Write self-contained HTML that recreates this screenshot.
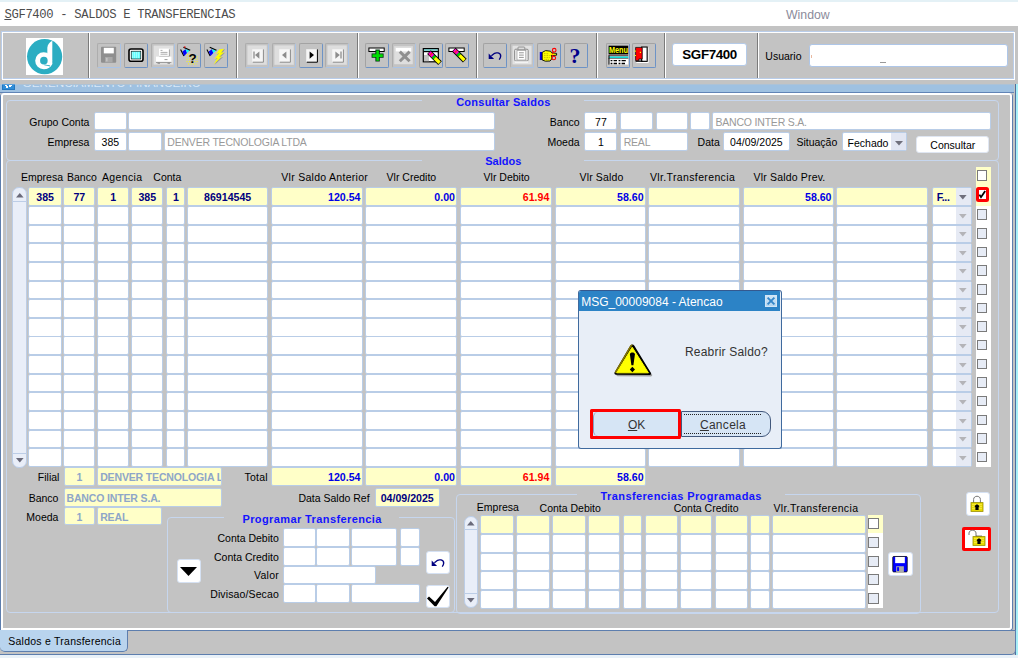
<!DOCTYPE html>
<html><head><meta charset="utf-8"><title>SGF7400 - SALDOS E TRANSFERENCIAS</title>
<style>
html,body{margin:0;padding:0;}
body{width:1018px;height:658px;overflow:hidden;background:#c3c3c3;position:relative;font-family:"Liberation Sans",Arial,sans-serif;font-size:11px;color:#000;}
div{position:absolute;box-sizing:border-box;white-space:nowrap;}
svg{position:absolute;overflow:visible;}
.l{height:16px;line-height:16px;font-size:10.5px;color:#000;}
.t{height:16px;line-height:16px;font-size:11px;font-weight:bold;color:#1414ff;}
.f{background:#fff;border:1px solid #b9cde7;border-radius:2px;font-size:10.5px;overflow:hidden;}
.y{background:#ffffc8;}
.c{text-align:center;}
.r{text-align:right;padding-right:1.3px;}
.p{padding-left:2.3px;}
.b{font-weight:bold;color:#000080;font-size:10.6px;}
.bl{font-weight:bold;color:#0000e6;font-size:10.6px;}
.rd{font-weight:bold;color:#ff0000;font-size:10.6px;}
.g{color:#999;letter-spacing:-0.2px;}
.lb{font-weight:bold;color:#8ea6c8;font-size:10.5px;}
.fr{border:1px solid #c6d6ee;border-radius:4px;}
.btn{border:1px solid;border-color:#adadad #a9c3e6 #a9c3e6 #adadad;border-radius:2px;}
.btn.en{border-color:#a3a3a3 #6d93c6 #6d93c6 #a3a3a3;}
.sep{width:2px;border-left:1px solid #7b7b7b;border-right:1px solid #fff;top:33px;height:45px;}
.ck{width:10.5px;height:10.5px;border:1px solid #7a7a7a;background:#e7ecf6;}
.wb{background:#fff;border-radius:2px;}
</style></head><body>

<div style="left:0;top:0;width:1018px;height:2px;background:#e4f1f6"></div>
<div style="left:0;top:2px;width:1018px;height:24px;background:#fff"></div>
<div style="left:4.4px;top:6.2px;height:18px;line-height:18px;font-family:'Liberation Mono',monospace;font-size:12.2px;letter-spacing:-0.32px;color:#4c4c4c"><u>S</u>GF7400 - SALDOS E TRANSFERENCIAS</div>
<div style="left:786px;top:7.2px;height:16px;line-height:16px;font-size:12.3px;color:#8b8b9b">Window</div>
<div style="left:1px;top:31px;width:1013px;height:48px;border:1px solid #b9cdea"></div>
<div style="left:2px;top:32px;width:1013px;height:48px;border:1px solid #fff"></div>
<div class="sep" style="left:88px"></div>
<div class="sep" style="left:236px"></div>
<div class="sep" style="left:357px"></div>
<div class="sep" style="left:476px"></div>
<div class="sep" style="left:596px"></div>
<div class="sep" style="left:664px"></div>
<div class="sep" style="left:757px"></div>
<div style="left:25.8px;top:37.8px;width:37.4px;height:37.4px;background:#fff"></div>
<svg style="left:25.8px;top:37.8px" width="37.4" height="37.4" viewBox="80 80 512 512">
<circle cx="335" cy="335" r="241" fill="#2badc2"/>
<circle cx="322" cy="392" r="116" fill="#fff"/>
<path d="M440 118 C400 140 375 170 372 215 L372 440 L440 440 Z" fill="#fff"/>
<path d="M440 430 C430 470 395 500 330 508 L330 470 L420 430 Z" fill="#fff"/>
<circle cx="325" cy="390" r="52" fill="#2badc2"/>
<path d="M330 442 C370 448 395 452 412 458 L405 470 C385 462 360 455 330 452 Z" fill="#2badc2"/>
</svg>
<div class="btn" style="left:97.4px;top:43.2px;width:24px;height:24.6px"></div>
<div class="btn en" style="left:124.0px;top:43.2px;width:24px;height:24.6px"></div>
<div class="btn" style="left:150.6px;top:43.2px;width:24px;height:24.6px"></div>
<div class="btn en" style="left:177.3px;top:43.2px;width:24px;height:24.6px"></div>
<div class="btn en" style="left:204.0px;top:43.2px;width:24px;height:24.6px"></div>
<div class="btn" style="left:245.3px;top:43.2px;width:24px;height:24.6px"></div>
<div class="btn" style="left:272.0px;top:43.2px;width:24px;height:24.6px"></div>
<div class="btn en" style="left:298.6px;top:43.2px;width:24px;height:24.6px"></div>
<div class="btn" style="left:325.3px;top:43.2px;width:24px;height:24.6px"></div>
<div class="btn en" style="left:365.3px;top:43.2px;width:24px;height:24.6px"></div>
<div class="btn" style="left:392.0px;top:43.2px;width:24px;height:24.6px"></div>
<div class="btn en" style="left:418.6px;top:43.2px;width:24px;height:24.6px"></div>
<div class="btn en" style="left:445.3px;top:43.2px;width:24px;height:24.6px"></div>
<div class="btn en" style="left:483.2px;top:43.2px;width:24px;height:24.6px"></div>
<div class="btn" style="left:510.3px;top:43.2px;width:24px;height:24.6px"></div>
<div class="btn en" style="left:537.2px;top:43.2px;width:24px;height:24.6px"></div>
<div class="btn en" style="left:563.7px;top:43.2px;width:24px;height:24.6px"></div>
<div class="btn en" style="left:605.6px;top:43.2px;width:24px;height:24.6px"></div>
<div class="btn en" style="left:632.0px;top:43.2px;width:24px;height:24.6px"></div>
<svg style="left:97.4px;top:43.4px" width="24" height="24" viewBox="0 0 24 24"><rect x="4" y="3.8" width="15.2" height="16" rx="1" fill="#8f8f8f"/><rect x="6.8" y="4.8" width="10" height="5.6" fill="#fff"/><rect x="8" y="14" width="7.6" height="5.4" fill="#a8a8a8"/><rect x="9" y="14.8" width="1.6" height="3.6" fill="#c3c3c3"/></svg>
<svg style="left:124.0px;top:43.4px" width="24" height="24" viewBox="0 0 24 24"><rect x="5" y="6" width="14" height="12.2" rx="2" fill="#fff" stroke="#000" stroke-width="1.6"/><rect x="7.2" y="8.2" width="9.6" height="7.8" fill="#6ff" stroke="#000" stroke-width="0.6"/><path d="M8 10h8M8 12h8M8 14h8" stroke="#dff" stroke-width="0.9" stroke-dasharray="1 1"/></svg>
<svg style="left:150.6px;top:43.4px" width="24" height="24" viewBox="0 0 24 24"><rect x="2.6" y="2.6" width="19.6" height="19" fill="#e0e0e0"/><rect x="8" y="5.6" width="10.4" height="7.4" fill="#fff"/><path d="M18.4 6.4v7H8.4" stroke="#9a9a9a" stroke-width="0.9" fill="none"/><path d="M9.5 7.4h2M9.5 9.4h7M9.5 11.2h7" stroke="#8a8a8a" stroke-width="0.7"/><rect x="5" y="13.6" width="15.4" height="5.6" fill="#fff"/><path d="M5 19.4h15.4" stroke="#8a8a8a" stroke-width="0.9"/><path d="M6.5 20.2h2.5M16.5 20.2h2.5" stroke="#8a8a8a" stroke-width="1.2"/><path d="M13.5 16.6h3" stroke="#9a9a9a" stroke-width="1"/></svg>
<svg style="left:177.3px;top:43.4px" width="24" height="24" viewBox="0 0 24 24"><path d="M3.6 6.4l3.3 6.6" stroke="#000" stroke-width="1.1"/><path d="M5.4 8.4L8.6 6.3 10 10.1 7.2 12.9z" fill="#00f"/><path d="M8.6 6.3l4.4 1-3 2.8z" fill="#0ff"/><path d="M6.4 4.3l6.8 3" stroke="#000" stroke-width="1.1"/><circle cx="7.8" cy="4" r="0.8" fill="#f00"/><path d="M10 11.4h3M9.6 13.8h11M9.6 16.2h11M9.6 18.6h11M11 21h9.6" stroke="#ff0" stroke-width="1" stroke-dasharray="1 1.5"/><text x="11.4" y="20.4" font-family="Liberation Sans,Arial,sans-serif" font-weight="bold" font-size="13.4" fill="#000">?</text></svg>
<svg style="left:204.0px;top:43.4px" width="24" height="24" viewBox="0 0 24 24"><g transform="translate(-0.7 0)"><path d="M3.6 6.4l3.3 6.6" stroke="#000" stroke-width="1.1"/><path d="M5.4 8.4L8.6 6.3 10 10.1 7.2 12.9z" fill="#00f"/><path d="M8.6 6.3l4.4 1-3 2.8z" fill="#0ff"/><path d="M6.4 4.3l6.8 3" stroke="#000" stroke-width="1.1"/></g><path d="M16 7.4L21 6.2 18 10.4 21.2 9.6 16 14.8 19.2 14 10.4 22 14.4 15.6 11.2 16.8 16 10.8 12.8 12z" fill="#777" opacity="0.55"/><path d="M15.1 6.5L20 5.7 17.1 9.7 20.4 8.9 15.1 14.1 18.3 13.3 9.5 21.4 13.5 14.9 10.3 16.1 15.1 10.1 11.9 11.3z" fill="#ff0"/></svg>
<svg style="left:245.3px;top:43.4px" width="24" height="24" viewBox="0 0 24 24"><rect x="2.4" y="2.4" width="19.4" height="19.4" fill="#dedede"/><rect x="7.2" y="6.2" width="11" height="12.8" fill="#f6f6f6"/><path d="M18.4 6.4v12.8H7.8" stroke="#8c8c8c" stroke-width="1" fill="none"/><path d="M9 8.6v7" stroke="#8c8c8c" stroke-width="1.3"/><path d="M14.4 8.4v7.4l-4.4-3.7z" fill="#8c8c8c"/></svg>
<svg style="left:272.0px;top:43.4px" width="24" height="24" viewBox="0 0 24 24"><rect x="2.4" y="2.4" width="19.4" height="19.4" fill="#dedede"/><rect x="7.2" y="6.2" width="11" height="12.8" fill="#f6f6f6"/><path d="M18.4 6.4v12.8H7.8" stroke="#8c8c8c" stroke-width="1" fill="none"/><path d="M14.4 8.4v7.4l-4.4-3.7z" fill="#8c8c8c"/></svg>
<svg style="left:298.6px;top:43.4px" width="24" height="24" viewBox="0 0 24 24"><rect x="7.2" y="6.2" width="11" height="12.8" fill="#f6f6f6"/><path d="M18.4 6.4v12.8H7.8" stroke="#000" stroke-width="1" fill="none"/><path d="M10.6 8.4v7.4l4.4-3.7z" fill="#000"/></svg>
<svg style="left:325.3px;top:43.4px" width="24" height="24" viewBox="0 0 24 24"><rect x="2.4" y="2.4" width="19.4" height="19.4" fill="#dedede"/><rect x="7.2" y="6.2" width="11" height="12.8" fill="#f6f6f6"/><path d="M18.4 6.4v12.8H7.8" stroke="#8c8c8c" stroke-width="1" fill="none"/><path d="M16 8.6v7" stroke="#8c8c8c" stroke-width="1.3"/><path d="M10.4 8.4v7.4l4.4-3.7z" fill="#8c8c8c"/></svg>
<svg style="left:365.3px;top:43.4px" width="24" height="24" viewBox="0 0 24 24"><rect x="3.9" y="5" width="15.3" height="3.5" fill="#fff" stroke="#000" stroke-width="1"/><path d="M12.6 6.6v12M6.6 12.6h12" stroke="#031" stroke-width="4.4"/><path d="M12.6 7.4v10.4M7.4 12.6h10.4" stroke="#0d0" stroke-width="2.6"/></svg>
<svg style="left:392.0px;top:43.4px" width="24" height="24" viewBox="0 0 24 24"><rect x="2.2" y="3.2" width="18.6" height="18" fill="#dedede"/><rect x="3.8" y="5" width="15.4" height="3.4" fill="#fff"/><path d="M7.8 8.6l9.8 9.6M17.6 8.6l-9.8 9.6" stroke="#8f8f8f" stroke-width="3"/></svg>
<svg style="left:418.6px;top:43.4px" width="24" height="24" viewBox="0 0 24 24"><rect x="4.3" y="5.6" width="15" height="13.2" fill="#fff" stroke="#000" stroke-width="1.2"/><path d="M4.4 8.6h15" stroke="#000" stroke-width="1.2"/><path d="M5 7h13.6" stroke="#2aa" stroke-width="1.1"/><path d="M5 18.2V12l5.4-.2z" fill="#b8b8b8"/><rect x="5" y="12" width="5" height="6.2" fill="#c3c3c3"/><path d="M10.0 9.2l11 11" stroke="#000" stroke-width="5.2"/><path d="M10.4 9.6l3.6 3.6" stroke="#f0c" stroke-width="3.6"/><path d="M11.6 10.799999999999999l0.9 0.9" stroke="#f22" stroke-width="3.6"/><path d="M14.0 13.2l1.8 1.8" stroke="#0c0" stroke-width="3.6"/><path d="M15.8 15.0l4.8 4.8" stroke="#ff0" stroke-width="3.4"/></svg>
<svg style="left:445.3px;top:43.4px" width="24" height="24" viewBox="0 0 24 24"><rect x="3.9" y="5" width="15.3" height="3.5" fill="#fff" stroke="#000" stroke-width="1"/><path d="M8.799999999999999 6.6l11 11" stroke="#000" stroke-width="5.2"/><path d="M9.2 7.0l3.6 3.6" stroke="#f0c" stroke-width="3.6"/><path d="M10.399999999999999 8.2l0.9 0.9" stroke="#f22" stroke-width="3.6"/><path d="M12.799999999999999 10.6l1.8 1.8" stroke="#0c0" stroke-width="3.6"/><path d="M14.6 12.4l4.8 4.8" stroke="#ff0" stroke-width="3.4"/></svg>
<svg style="left:483.2px;top:43.4px" width="24" height="24" viewBox="0 0 24 24"><path d="M8.4 12.8L11.6 10.3Q12.4 9.9 13.4 9.9H15Q17.6 10.4 17.7 13Q17.6 15 16.2 16.6" stroke="#000080" stroke-width="1.4" fill="none"/><path d="M5.7 10.6v5.4h5.4z" fill="#000080"/></svg>
<svg style="left:510.3px;top:43.4px" width="24" height="24" viewBox="0 0 24 24"><rect x="2.5" y="2.7" width="19.1" height="18.7" fill="#e2e2e2"/><rect x="4.6" y="6.2" width="13.6" height="11.8" rx="1.2" fill="#e9e9e9" stroke="#8a8a8a" stroke-width="1"/><path d="M5 19h13" stroke="#fff" stroke-width="1.2"/><rect x="8" y="4" width="6.8" height="2.8" rx="0.8" fill="#ddd" stroke="#8a8a8a" stroke-width="0.9"/><rect x="7" y="7.4" width="8.8" height="9.6" fill="#fff" stroke="#9a9a9a" stroke-width="0.7"/><path d="M9 9.8h4.8M9 12.1h4.8M9 14.4h4.8" stroke="#8a8a8a" stroke-width="0.9"/></svg>
<svg style="left:537.2px;top:43.4px" width="24" height="24" viewBox="0 0 24 24"><rect x="2.8" y="9" width="2.4" height="8" fill="#00e"/><path d="M5.2 9.4l3.4-1.8 5 .6 1 1.6 5 .6v1.8l-5.4.4.8 1.4-.4 1.6-.6 1.4-1 1-4.6.2-3.2-1.2z" fill="#ff0" stroke="#000" stroke-width="0.9" stroke-linejoin="round"/><path d="M7 10.6l5 .2M7 12.6h6M7 14.6h5.6M7.6 16.4h4.4" stroke="#8a7a00" stroke-width="0.6" stroke-dasharray="0.8 0.8"/><circle cx="17.2" cy="7.2" r="1.8" fill="none" stroke="#f00" stroke-width="1.1"/><circle cx="16.8" cy="15" r="1.8" fill="none" stroke="#f00" stroke-width="1.1"/><path d="M16.6 8.8l-1.4 2.4M16.2 13.4l-1-1.6" stroke="#f00" stroke-width="1"/></svg>
<svg style="left:563.7px;top:43.4px" width="24" height="24" viewBox="0 0 24 24"><text x="5.6" y="19.6" font-family="Liberation Serif,serif" font-weight="bold" font-size="22" fill="#00008b">?</text></svg>
<svg style="left:605.6px;top:43.4px" width="24" height="24" viewBox="0 0 24 24"><rect x="2.6" y="2.7" width="19.6" height="8.7" fill="#000"/><text x="3" y="10.3" font-family="Liberation Sans,Arial,sans-serif" font-weight="bold" font-size="9.6" fill="#ff0" textLength="19" lengthAdjust="spacingAndGlyphs">Menu</text><path d="M2.6 12.7h19.6" stroke="#400" stroke-width="0.7"/><rect x="3" y="13.5" width="19.2" height="1.4" fill="#0ee"/><path d="M2.6 15.4h19.6" stroke="#000" stroke-width="0.7"/><rect x="3" y="15.7" width="19.2" height="5.9" fill="#fff"/><path d="M3 12.4v9.2" stroke="#000" stroke-width="1"/><path d="M4.6 17.7h1.8M7.6 17.7h3.4M12.6 17.7h1.8M15.6 17.7h4.2M4.6 20.5h1.8M7.6 20.5h3.4M12.6 20.5h1.8M15.6 20.5h3.4" stroke="#000" stroke-width="1.3"/></svg>
<svg style="left:632.0px;top:43.4px" width="24" height="24" viewBox="0 0 24 24"><path d="M16 4.4v15H4.4" stroke="#fff" stroke-width="1.2" fill="none"/><rect x="9.6" y="4" width="5.6" height="14.4" fill="#d8d8d8" stroke="#000" stroke-width="1"/><rect x="11" y="5" width="3" height="12" fill="#fff"/><path d="M3.6 18.2h7" stroke="#000" stroke-width="1.2"/><path d="M3.6 4.4h6.6v11.6h-3.4v1.6H3.6z" fill="#f00" stroke="#000" stroke-width="0.7"/><rect x="2.6" y="7.6" width="1.4" height="1" fill="#ff0"/><rect x="2.6" y="12" width="1.4" height="1" fill="#ff0"/><rect x="7.8" y="8.8" width="1.2" height="1.2" fill="#ff0"/></svg>
<div style="left:672.3px;top:43.2px;width:74.6px;height:23px;line-height:22.4px;background:#fff;border:1px solid #b4cae8;border-radius:3px;text-align:center;font-weight:bold;font-size:13.4px;letter-spacing:-0.4px;color:#000">SGF7400</div>
<div class="l" style="left:765.30px;top:47.50px;">Usuario</div>
<div style="left:808.7px;top:43.6px;width:199.8px;height:23px;background:#fff;border:1px solid #aec6e8;border-radius:3px"></div>
<div style="left:811.3px;top:55px;width:1px;height:3px;background:#e9b9a0"></div><div style="left:880px;top:61.6px;width:6px;height:1px;background:#999"></div>
<div style="left:0;top:84px;width:1014px;height:1px;background:#adc2d6"></div>
<div style="left:0;top:85px;width:1014px;height:7.4px;background:#9fc1e1;overflow:hidden"><div style="left:22.6px;top:-8.6px;height:14px;line-height:14px;font-size:11.7px;color:#d9e8f7;">GERENCIAMENTO FINANCEIRO</div><div style="left:2px;top:-1px;width:13px;height:6px;background:#2f8dd8;border:1px solid #2277c0;border-top:none"></div><div style="left:5px;top:0;width:2.4px;height:1.4px;background:#fff"></div><div style="left:6.2px;top:1px;width:1.8px;height:1.6px;background:#fff"></div><div style="left:9.2px;top:0;width:3px;height:1px;background:#fff"></div><div style="left:9.2px;top:0.6px;width:1.6px;height:1.4px;background:#fff"></div></div>
<div style="left:2px;top:84px;width:13px;height:1px;background:#5aa0dc"></div>
<div style="left:0;top:92.2px;width:1014px;height:1px;background:#6184b6"></div>
<div style="left:1015.3px;top:84px;width:1px;height:571px;background:#4f6f9f"></div>
<div style="left:1016.2px;top:84px;width:2px;height:574px;background:#a6eef7"></div>
<div style="left:0;top:92.6px;width:1013.4px;height:538px;border:1px solid #5d7eae;border-top-color:#7d99c2;border-radius:4px 4px 4px 0;"></div>
<div style="left:1px;top:93.2px;width:1011.4px;height:536.6px;border:2px solid #fff;border-radius:3px 3px 3px 0;"></div>
<div class="fr" style="left:6.3px;top:100px;width:992.5px;height:61.0px;"></div><div style="left:422px;top:99px;width:162px;height:3px;background:#c3c3c3"></div><div class="t" style="left:456.2px;top:94.20px;letter-spacing:0.24px">Consultar Saldos</div>
<div class="fr" style="left:6.3px;top:160.0px;width:992.5px;height:453.0px;"></div><div style="left:422px;top:159.0px;width:162px;height:3px;background:#c3c3c3"></div><div class="t" style="left:485.2px;top:153.20px;letter-spacing:0px">Saldos</div>
<div class="fr" style="left:167.2px;top:516.6px;width:288.0px;height:96.19999999999993px;"></div><div style="left:223.5px;top:515.6px;width:175.10000000000002px;height:3px;background:#c3c3c3"></div><div class="t" style="left:242.4px;top:511.00px;letter-spacing:0.4px">Programar Transferencia</div>
<div class="fr" style="left:456.2px;top:494.4px;width:464.40000000000003px;height:119.39999999999998px;"></div><div style="left:577px;top:493.4px;width:207.5px;height:3px;background:#c3c3c3"></div><div class="t" style="left:600.6px;top:488.30px;letter-spacing:0.39px">Transferencias Programadas</div>
<div class="l" style="left:-210.60px;width:300px;text-align:right;top:114.00px;">Grupo Conta</div>
<div class="l" style="left:-210.60px;width:300px;text-align:right;top:134.20px;">Empresa</div>
<div class="f" style="left:94.00px;top:111.90px;width:32.70px;height:18.60px;line-height:18.60px;"></div>
<div class="f" style="left:128.30px;top:111.90px;width:366.70px;height:18.60px;line-height:18.60px;"></div>
<div class="f c" style="left:94.00px;top:132.00px;width:32.70px;height:18.80px;line-height:18.80px;">385</div>
<div class="f" style="left:128.30px;top:132.00px;width:33.70px;height:18.80px;line-height:18.80px;"></div>
<div class="f g p" style="left:164.00px;top:132.00px;width:331.00px;height:18.80px;line-height:18.80px;">DENVER TECNOLOGIA LTDA</div>
<div class="l" style="left:279.60px;width:300px;text-align:right;top:114.00px;">Banco</div>
<div class="l" style="left:279.60px;width:300px;text-align:right;top:134.20px;">Moeda</div>
<div class="f c" style="left:584.30px;top:111.90px;width:33.20px;height:18.60px;line-height:18.60px;">77</div>
<div class="f" style="left:620.40px;top:111.90px;width:33.10px;height:18.60px;line-height:18.60px;"></div>
<div class="f" style="left:655.60px;top:111.90px;width:32.00px;height:18.60px;line-height:18.60px;"></div>
<div class="f" style="left:690.20px;top:111.90px;width:19.50px;height:18.60px;line-height:18.60px;"></div>
<div class="f g p" style="left:712.20px;top:111.90px;width:278.60px;height:18.60px;line-height:18.60px;">BANCO INTER S.A.</div>
<div class="f c" style="left:584.30px;top:132.00px;width:33.20px;height:18.80px;line-height:18.80px;">1</div>
<div class="f g p" style="left:620.40px;top:132.00px;width:67.20px;height:18.80px;line-height:18.80px;">REAL</div>
<div class="l" style="left:697.60px;top:134.20px;">Data</div>
<div class="f c" style="left:723.20px;top:132.00px;width:66.40px;height:18.80px;line-height:18.80px;">04/09/2025</div>
<div class="l" style="left:796.40px;top:134.20px;">Situação</div>
<div class="f" style="left:842.30px;top:132.00px;width:65.00px;height:18.80px;line-height:18.80px;padding-left:4.3px;"><span style="position:relative;top:1.1px">Fechado</span><div style="right:0;top:0;width:15px;height:100%;background:#e2e6f2"></div><svg style="right:3.4px;top:8px" width="8" height="5" viewBox="0 0 8 5"><path d="M0 0h8L4 4.4z" fill="#70707c"/></svg></div>
<div class="f c" style="left:916.20px;top:135.60px;width:73.20px;height:17.60px;line-height:17.60px;border-color:#dfe6f2;border-radius:3px;">Consultar</div>
<div class="l" style="left:21.00px;top:168.80px;">Empresa</div>
<div class="l" style="left:67.00px;top:168.80px;">Banco</div>
<div class="l" style="left:102.00px;top:168.80px;letter-spacing:0.35px">Agencia</div>
<div class="l" style="left:153.30px;top:168.80px;">Conta</div>
<div class="l" style="left:281.30px;top:168.80px;letter-spacing:0.28px">Vlr Saldo Anterior</div>
<div class="l" style="left:386.60px;top:168.80px;">Vlr Credito</div>
<div class="l" style="left:483.60px;top:168.80px;">Vlr Debito</div>
<div class="l" style="left:579.50px;top:168.80px;letter-spacing:0.15px">Vlr Saldo</div>
<div class="l" style="left:649.90px;top:168.80px;letter-spacing:0.37px">Vlr.Transferencia</div>
<div class="l" style="left:753.60px;top:168.80px;letter-spacing:0.17px">Vlr Saldo Prev.</div>
<div style="left:975.8px;top:167.2px;width:15.2px;height:38.74px;background:#ffffc8"></div>
<div style="left:975.8px;top:205.94px;width:15.2px;height:261.00px;background:#fff"></div>
<div class="ck" style="left:976.6px;top:170.2px;background:#fff"></div>
<div class="f y b c" style="left:28.40px;top:187.30px;width:33.50px;height:18.74px;line-height:18.74px;">385</div>
<div class="f y b c" style="left:63.20px;top:187.30px;width:32.30px;height:18.74px;line-height:18.74px;">77</div>
<div class="f y b c" style="left:97.00px;top:187.30px;width:32.40px;height:18.74px;line-height:18.74px;">1</div>
<div class="f y b c" style="left:131.30px;top:187.30px;width:32.00px;height:18.74px;line-height:18.74px;">385</div>
<div class="f y b c" style="left:166.30px;top:187.30px;width:19.20px;height:18.74px;line-height:18.74px;">1</div>
<div class="f y b c" style="left:187.40px;top:187.30px;width:80.50px;height:18.74px;line-height:18.74px;">86914545</div>
<div class="f y bl r" style="left:271.20px;top:187.30px;width:91.60px;height:18.74px;line-height:18.74px;">120.54</div>
<div class="f y bl r" style="left:365.20px;top:187.30px;width:92.10px;height:18.74px;line-height:18.74px;">0.00</div>
<div class="f y rd r" style="left:459.80px;top:187.30px;width:91.80px;height:18.74px;line-height:18.74px;">61.94</div>
<div class="f y bl r" style="left:554.60px;top:187.30px;width:91.30px;height:18.74px;line-height:18.74px;">58.60</div>
<div class="f y bl r" style="left:647.50px;top:187.30px;width:92.40px;height:18.74px;line-height:18.74px;"></div>
<div class="f y bl r" style="left:742.80px;top:187.30px;width:91.00px;height:18.74px;line-height:18.74px;">58.60</div>
<div class="f y bl r" style="left:836.10px;top:187.30px;width:91.60px;height:18.74px;line-height:18.74px;"></div>
<div class="f y b" style="left:931.60px;top:187.30px;width:40.00px;height:18.74px;line-height:18.74px;padding-left:4.2px;letter-spacing:-0.35px;">F...<div style="right:0;top:0;width:15px;height:100%;background:#e6eaf4"></div><svg style="right:3.6px;top:6.6px" width="7.6" height="4.4" viewBox="0 0 8 4.6"><path d="M0 0h8L4 4.6z" fill="#70707c"/></svg></div>
<div style="left:975.9px;top:186.8px;width:13px;height:15.1px;border:3px solid #f00;border-radius:2.5px;background:#fff"></div>
<svg style="left:978.9px;top:190.3px" width="7.2" height="8.6" viewBox="0 0 7.2 8.6"><path d="M0.4 4.6l1.6 2.6L6.2 1" stroke="#000" stroke-width="1.8" fill="none"/></svg>
<div class="f" style="left:28.40px;top:205.94px;width:33.50px;height:18.74px;line-height:18.74px;"></div>
<div class="f" style="left:63.20px;top:205.94px;width:32.30px;height:18.74px;line-height:18.74px;"></div>
<div class="f" style="left:97.00px;top:205.94px;width:32.40px;height:18.74px;line-height:18.74px;"></div>
<div class="f" style="left:131.30px;top:205.94px;width:32.00px;height:18.74px;line-height:18.74px;"></div>
<div class="f" style="left:166.30px;top:205.94px;width:19.20px;height:18.74px;line-height:18.74px;"></div>
<div class="f" style="left:187.40px;top:205.94px;width:80.50px;height:18.74px;line-height:18.74px;"></div>
<div class="f" style="left:271.20px;top:205.94px;width:91.60px;height:18.74px;line-height:18.74px;"></div>
<div class="f" style="left:365.20px;top:205.94px;width:92.10px;height:18.74px;line-height:18.74px;"></div>
<div class="f" style="left:459.80px;top:205.94px;width:91.80px;height:18.74px;line-height:18.74px;"></div>
<div class="f" style="left:554.60px;top:205.94px;width:91.30px;height:18.74px;line-height:18.74px;"></div>
<div class="f" style="left:647.50px;top:205.94px;width:92.40px;height:18.74px;line-height:18.74px;"></div>
<div class="f" style="left:742.80px;top:205.94px;width:91.00px;height:18.74px;line-height:18.74px;"></div>
<div class="f" style="left:836.10px;top:205.94px;width:91.60px;height:18.74px;line-height:18.74px;"></div>
<div class="f" style="left:931.60px;top:205.94px;width:40.00px;height:18.74px;line-height:18.74px;"><div style="right:0;top:0;width:15px;height:100%;background:#e6eaf4"></div><svg style="right:3.6px;top:6.6px" width="7.6" height="4.4" viewBox="0 0 8 4.6"><path d="M0 0h8L4 4.6z" fill="#b4b4b8"/></svg></div>
<div class="ck" style="left:976.6px;top:209.44px"></div>
<div class="f" style="left:28.40px;top:224.59px;width:33.50px;height:18.74px;line-height:18.74px;"></div>
<div class="f" style="left:63.20px;top:224.59px;width:32.30px;height:18.74px;line-height:18.74px;"></div>
<div class="f" style="left:97.00px;top:224.59px;width:32.40px;height:18.74px;line-height:18.74px;"></div>
<div class="f" style="left:131.30px;top:224.59px;width:32.00px;height:18.74px;line-height:18.74px;"></div>
<div class="f" style="left:166.30px;top:224.59px;width:19.20px;height:18.74px;line-height:18.74px;"></div>
<div class="f" style="left:187.40px;top:224.59px;width:80.50px;height:18.74px;line-height:18.74px;"></div>
<div class="f" style="left:271.20px;top:224.59px;width:91.60px;height:18.74px;line-height:18.74px;"></div>
<div class="f" style="left:365.20px;top:224.59px;width:92.10px;height:18.74px;line-height:18.74px;"></div>
<div class="f" style="left:459.80px;top:224.59px;width:91.80px;height:18.74px;line-height:18.74px;"></div>
<div class="f" style="left:554.60px;top:224.59px;width:91.30px;height:18.74px;line-height:18.74px;"></div>
<div class="f" style="left:647.50px;top:224.59px;width:92.40px;height:18.74px;line-height:18.74px;"></div>
<div class="f" style="left:742.80px;top:224.59px;width:91.00px;height:18.74px;line-height:18.74px;"></div>
<div class="f" style="left:836.10px;top:224.59px;width:91.60px;height:18.74px;line-height:18.74px;"></div>
<div class="f" style="left:931.60px;top:224.59px;width:40.00px;height:18.74px;line-height:18.74px;"><div style="right:0;top:0;width:15px;height:100%;background:#e6eaf4"></div><svg style="right:3.6px;top:6.6px" width="7.6" height="4.4" viewBox="0 0 8 4.6"><path d="M0 0h8L4 4.6z" fill="#b4b4b8"/></svg></div>
<div class="ck" style="left:976.6px;top:228.09px"></div>
<div class="f" style="left:28.40px;top:243.23px;width:33.50px;height:18.74px;line-height:18.74px;"></div>
<div class="f" style="left:63.20px;top:243.23px;width:32.30px;height:18.74px;line-height:18.74px;"></div>
<div class="f" style="left:97.00px;top:243.23px;width:32.40px;height:18.74px;line-height:18.74px;"></div>
<div class="f" style="left:131.30px;top:243.23px;width:32.00px;height:18.74px;line-height:18.74px;"></div>
<div class="f" style="left:166.30px;top:243.23px;width:19.20px;height:18.74px;line-height:18.74px;"></div>
<div class="f" style="left:187.40px;top:243.23px;width:80.50px;height:18.74px;line-height:18.74px;"></div>
<div class="f" style="left:271.20px;top:243.23px;width:91.60px;height:18.74px;line-height:18.74px;"></div>
<div class="f" style="left:365.20px;top:243.23px;width:92.10px;height:18.74px;line-height:18.74px;"></div>
<div class="f" style="left:459.80px;top:243.23px;width:91.80px;height:18.74px;line-height:18.74px;"></div>
<div class="f" style="left:554.60px;top:243.23px;width:91.30px;height:18.74px;line-height:18.74px;"></div>
<div class="f" style="left:647.50px;top:243.23px;width:92.40px;height:18.74px;line-height:18.74px;"></div>
<div class="f" style="left:742.80px;top:243.23px;width:91.00px;height:18.74px;line-height:18.74px;"></div>
<div class="f" style="left:836.10px;top:243.23px;width:91.60px;height:18.74px;line-height:18.74px;"></div>
<div class="f" style="left:931.60px;top:243.23px;width:40.00px;height:18.74px;line-height:18.74px;"><div style="right:0;top:0;width:15px;height:100%;background:#e6eaf4"></div><svg style="right:3.6px;top:6.6px" width="7.6" height="4.4" viewBox="0 0 8 4.6"><path d="M0 0h8L4 4.6z" fill="#b4b4b8"/></svg></div>
<div class="ck" style="left:976.6px;top:246.73px"></div>
<div class="f" style="left:28.40px;top:261.87px;width:33.50px;height:18.74px;line-height:18.74px;"></div>
<div class="f" style="left:63.20px;top:261.87px;width:32.30px;height:18.74px;line-height:18.74px;"></div>
<div class="f" style="left:97.00px;top:261.87px;width:32.40px;height:18.74px;line-height:18.74px;"></div>
<div class="f" style="left:131.30px;top:261.87px;width:32.00px;height:18.74px;line-height:18.74px;"></div>
<div class="f" style="left:166.30px;top:261.87px;width:19.20px;height:18.74px;line-height:18.74px;"></div>
<div class="f" style="left:187.40px;top:261.87px;width:80.50px;height:18.74px;line-height:18.74px;"></div>
<div class="f" style="left:271.20px;top:261.87px;width:91.60px;height:18.74px;line-height:18.74px;"></div>
<div class="f" style="left:365.20px;top:261.87px;width:92.10px;height:18.74px;line-height:18.74px;"></div>
<div class="f" style="left:459.80px;top:261.87px;width:91.80px;height:18.74px;line-height:18.74px;"></div>
<div class="f" style="left:554.60px;top:261.87px;width:91.30px;height:18.74px;line-height:18.74px;"></div>
<div class="f" style="left:647.50px;top:261.87px;width:92.40px;height:18.74px;line-height:18.74px;"></div>
<div class="f" style="left:742.80px;top:261.87px;width:91.00px;height:18.74px;line-height:18.74px;"></div>
<div class="f" style="left:836.10px;top:261.87px;width:91.60px;height:18.74px;line-height:18.74px;"></div>
<div class="f" style="left:931.60px;top:261.87px;width:40.00px;height:18.74px;line-height:18.74px;"><div style="right:0;top:0;width:15px;height:100%;background:#e6eaf4"></div><svg style="right:3.6px;top:6.6px" width="7.6" height="4.4" viewBox="0 0 8 4.6"><path d="M0 0h8L4 4.6z" fill="#b4b4b8"/></svg></div>
<div class="ck" style="left:976.6px;top:265.37px"></div>
<div class="f" style="left:28.40px;top:280.51px;width:33.50px;height:18.74px;line-height:18.74px;"></div>
<div class="f" style="left:63.20px;top:280.51px;width:32.30px;height:18.74px;line-height:18.74px;"></div>
<div class="f" style="left:97.00px;top:280.51px;width:32.40px;height:18.74px;line-height:18.74px;"></div>
<div class="f" style="left:131.30px;top:280.51px;width:32.00px;height:18.74px;line-height:18.74px;"></div>
<div class="f" style="left:166.30px;top:280.51px;width:19.20px;height:18.74px;line-height:18.74px;"></div>
<div class="f" style="left:187.40px;top:280.51px;width:80.50px;height:18.74px;line-height:18.74px;"></div>
<div class="f" style="left:271.20px;top:280.51px;width:91.60px;height:18.74px;line-height:18.74px;"></div>
<div class="f" style="left:365.20px;top:280.51px;width:92.10px;height:18.74px;line-height:18.74px;"></div>
<div class="f" style="left:459.80px;top:280.51px;width:91.80px;height:18.74px;line-height:18.74px;"></div>
<div class="f" style="left:554.60px;top:280.51px;width:91.30px;height:18.74px;line-height:18.74px;"></div>
<div class="f" style="left:647.50px;top:280.51px;width:92.40px;height:18.74px;line-height:18.74px;"></div>
<div class="f" style="left:742.80px;top:280.51px;width:91.00px;height:18.74px;line-height:18.74px;"></div>
<div class="f" style="left:836.10px;top:280.51px;width:91.60px;height:18.74px;line-height:18.74px;"></div>
<div class="f" style="left:931.60px;top:280.51px;width:40.00px;height:18.74px;line-height:18.74px;"><div style="right:0;top:0;width:15px;height:100%;background:#e6eaf4"></div><svg style="right:3.6px;top:6.6px" width="7.6" height="4.4" viewBox="0 0 8 4.6"><path d="M0 0h8L4 4.6z" fill="#b4b4b8"/></svg></div>
<div class="ck" style="left:976.6px;top:284.01px"></div>
<div class="f" style="left:28.40px;top:299.16px;width:33.50px;height:18.74px;line-height:18.74px;"></div>
<div class="f" style="left:63.20px;top:299.16px;width:32.30px;height:18.74px;line-height:18.74px;"></div>
<div class="f" style="left:97.00px;top:299.16px;width:32.40px;height:18.74px;line-height:18.74px;"></div>
<div class="f" style="left:131.30px;top:299.16px;width:32.00px;height:18.74px;line-height:18.74px;"></div>
<div class="f" style="left:166.30px;top:299.16px;width:19.20px;height:18.74px;line-height:18.74px;"></div>
<div class="f" style="left:187.40px;top:299.16px;width:80.50px;height:18.74px;line-height:18.74px;"></div>
<div class="f" style="left:271.20px;top:299.16px;width:91.60px;height:18.74px;line-height:18.74px;"></div>
<div class="f" style="left:365.20px;top:299.16px;width:92.10px;height:18.74px;line-height:18.74px;"></div>
<div class="f" style="left:459.80px;top:299.16px;width:91.80px;height:18.74px;line-height:18.74px;"></div>
<div class="f" style="left:554.60px;top:299.16px;width:91.30px;height:18.74px;line-height:18.74px;"></div>
<div class="f" style="left:647.50px;top:299.16px;width:92.40px;height:18.74px;line-height:18.74px;"></div>
<div class="f" style="left:742.80px;top:299.16px;width:91.00px;height:18.74px;line-height:18.74px;"></div>
<div class="f" style="left:836.10px;top:299.16px;width:91.60px;height:18.74px;line-height:18.74px;"></div>
<div class="f" style="left:931.60px;top:299.16px;width:40.00px;height:18.74px;line-height:18.74px;"><div style="right:0;top:0;width:15px;height:100%;background:#e6eaf4"></div><svg style="right:3.6px;top:6.6px" width="7.6" height="4.4" viewBox="0 0 8 4.6"><path d="M0 0h8L4 4.6z" fill="#b4b4b8"/></svg></div>
<div class="ck" style="left:976.6px;top:302.66px"></div>
<div class="f" style="left:28.40px;top:317.80px;width:33.50px;height:18.74px;line-height:18.74px;"></div>
<div class="f" style="left:63.20px;top:317.80px;width:32.30px;height:18.74px;line-height:18.74px;"></div>
<div class="f" style="left:97.00px;top:317.80px;width:32.40px;height:18.74px;line-height:18.74px;"></div>
<div class="f" style="left:131.30px;top:317.80px;width:32.00px;height:18.74px;line-height:18.74px;"></div>
<div class="f" style="left:166.30px;top:317.80px;width:19.20px;height:18.74px;line-height:18.74px;"></div>
<div class="f" style="left:187.40px;top:317.80px;width:80.50px;height:18.74px;line-height:18.74px;"></div>
<div class="f" style="left:271.20px;top:317.80px;width:91.60px;height:18.74px;line-height:18.74px;"></div>
<div class="f" style="left:365.20px;top:317.80px;width:92.10px;height:18.74px;line-height:18.74px;"></div>
<div class="f" style="left:459.80px;top:317.80px;width:91.80px;height:18.74px;line-height:18.74px;"></div>
<div class="f" style="left:554.60px;top:317.80px;width:91.30px;height:18.74px;line-height:18.74px;"></div>
<div class="f" style="left:647.50px;top:317.80px;width:92.40px;height:18.74px;line-height:18.74px;"></div>
<div class="f" style="left:742.80px;top:317.80px;width:91.00px;height:18.74px;line-height:18.74px;"></div>
<div class="f" style="left:836.10px;top:317.80px;width:91.60px;height:18.74px;line-height:18.74px;"></div>
<div class="f" style="left:931.60px;top:317.80px;width:40.00px;height:18.74px;line-height:18.74px;"><div style="right:0;top:0;width:15px;height:100%;background:#e6eaf4"></div><svg style="right:3.6px;top:6.6px" width="7.6" height="4.4" viewBox="0 0 8 4.6"><path d="M0 0h8L4 4.6z" fill="#b4b4b8"/></svg></div>
<div class="ck" style="left:976.6px;top:321.30px"></div>
<div class="f" style="left:28.40px;top:336.44px;width:33.50px;height:18.74px;line-height:18.74px;"></div>
<div class="f" style="left:63.20px;top:336.44px;width:32.30px;height:18.74px;line-height:18.74px;"></div>
<div class="f" style="left:97.00px;top:336.44px;width:32.40px;height:18.74px;line-height:18.74px;"></div>
<div class="f" style="left:131.30px;top:336.44px;width:32.00px;height:18.74px;line-height:18.74px;"></div>
<div class="f" style="left:166.30px;top:336.44px;width:19.20px;height:18.74px;line-height:18.74px;"></div>
<div class="f" style="left:187.40px;top:336.44px;width:80.50px;height:18.74px;line-height:18.74px;"></div>
<div class="f" style="left:271.20px;top:336.44px;width:91.60px;height:18.74px;line-height:18.74px;"></div>
<div class="f" style="left:365.20px;top:336.44px;width:92.10px;height:18.74px;line-height:18.74px;"></div>
<div class="f" style="left:459.80px;top:336.44px;width:91.80px;height:18.74px;line-height:18.74px;"></div>
<div class="f" style="left:554.60px;top:336.44px;width:91.30px;height:18.74px;line-height:18.74px;"></div>
<div class="f" style="left:647.50px;top:336.44px;width:92.40px;height:18.74px;line-height:18.74px;"></div>
<div class="f" style="left:742.80px;top:336.44px;width:91.00px;height:18.74px;line-height:18.74px;"></div>
<div class="f" style="left:836.10px;top:336.44px;width:91.60px;height:18.74px;line-height:18.74px;"></div>
<div class="f" style="left:931.60px;top:336.44px;width:40.00px;height:18.74px;line-height:18.74px;"><div style="right:0;top:0;width:15px;height:100%;background:#e6eaf4"></div><svg style="right:3.6px;top:6.6px" width="7.6" height="4.4" viewBox="0 0 8 4.6"><path d="M0 0h8L4 4.6z" fill="#b4b4b8"/></svg></div>
<div class="ck" style="left:976.6px;top:339.94px"></div>
<div class="f" style="left:28.40px;top:355.09px;width:33.50px;height:18.74px;line-height:18.74px;"></div>
<div class="f" style="left:63.20px;top:355.09px;width:32.30px;height:18.74px;line-height:18.74px;"></div>
<div class="f" style="left:97.00px;top:355.09px;width:32.40px;height:18.74px;line-height:18.74px;"></div>
<div class="f" style="left:131.30px;top:355.09px;width:32.00px;height:18.74px;line-height:18.74px;"></div>
<div class="f" style="left:166.30px;top:355.09px;width:19.20px;height:18.74px;line-height:18.74px;"></div>
<div class="f" style="left:187.40px;top:355.09px;width:80.50px;height:18.74px;line-height:18.74px;"></div>
<div class="f" style="left:271.20px;top:355.09px;width:91.60px;height:18.74px;line-height:18.74px;"></div>
<div class="f" style="left:365.20px;top:355.09px;width:92.10px;height:18.74px;line-height:18.74px;"></div>
<div class="f" style="left:459.80px;top:355.09px;width:91.80px;height:18.74px;line-height:18.74px;"></div>
<div class="f" style="left:554.60px;top:355.09px;width:91.30px;height:18.74px;line-height:18.74px;"></div>
<div class="f" style="left:647.50px;top:355.09px;width:92.40px;height:18.74px;line-height:18.74px;"></div>
<div class="f" style="left:742.80px;top:355.09px;width:91.00px;height:18.74px;line-height:18.74px;"></div>
<div class="f" style="left:836.10px;top:355.09px;width:91.60px;height:18.74px;line-height:18.74px;"></div>
<div class="f" style="left:931.60px;top:355.09px;width:40.00px;height:18.74px;line-height:18.74px;"><div style="right:0;top:0;width:15px;height:100%;background:#e6eaf4"></div><svg style="right:3.6px;top:6.6px" width="7.6" height="4.4" viewBox="0 0 8 4.6"><path d="M0 0h8L4 4.6z" fill="#b4b4b8"/></svg></div>
<div class="ck" style="left:976.6px;top:358.59px"></div>
<div class="f" style="left:28.40px;top:373.73px;width:33.50px;height:18.74px;line-height:18.74px;"></div>
<div class="f" style="left:63.20px;top:373.73px;width:32.30px;height:18.74px;line-height:18.74px;"></div>
<div class="f" style="left:97.00px;top:373.73px;width:32.40px;height:18.74px;line-height:18.74px;"></div>
<div class="f" style="left:131.30px;top:373.73px;width:32.00px;height:18.74px;line-height:18.74px;"></div>
<div class="f" style="left:166.30px;top:373.73px;width:19.20px;height:18.74px;line-height:18.74px;"></div>
<div class="f" style="left:187.40px;top:373.73px;width:80.50px;height:18.74px;line-height:18.74px;"></div>
<div class="f" style="left:271.20px;top:373.73px;width:91.60px;height:18.74px;line-height:18.74px;"></div>
<div class="f" style="left:365.20px;top:373.73px;width:92.10px;height:18.74px;line-height:18.74px;"></div>
<div class="f" style="left:459.80px;top:373.73px;width:91.80px;height:18.74px;line-height:18.74px;"></div>
<div class="f" style="left:554.60px;top:373.73px;width:91.30px;height:18.74px;line-height:18.74px;"></div>
<div class="f" style="left:647.50px;top:373.73px;width:92.40px;height:18.74px;line-height:18.74px;"></div>
<div class="f" style="left:742.80px;top:373.73px;width:91.00px;height:18.74px;line-height:18.74px;"></div>
<div class="f" style="left:836.10px;top:373.73px;width:91.60px;height:18.74px;line-height:18.74px;"></div>
<div class="f" style="left:931.60px;top:373.73px;width:40.00px;height:18.74px;line-height:18.74px;"><div style="right:0;top:0;width:15px;height:100%;background:#e6eaf4"></div><svg style="right:3.6px;top:6.6px" width="7.6" height="4.4" viewBox="0 0 8 4.6"><path d="M0 0h8L4 4.6z" fill="#b4b4b8"/></svg></div>
<div class="ck" style="left:976.6px;top:377.23px"></div>
<div class="f" style="left:28.40px;top:392.37px;width:33.50px;height:18.74px;line-height:18.74px;"></div>
<div class="f" style="left:63.20px;top:392.37px;width:32.30px;height:18.74px;line-height:18.74px;"></div>
<div class="f" style="left:97.00px;top:392.37px;width:32.40px;height:18.74px;line-height:18.74px;"></div>
<div class="f" style="left:131.30px;top:392.37px;width:32.00px;height:18.74px;line-height:18.74px;"></div>
<div class="f" style="left:166.30px;top:392.37px;width:19.20px;height:18.74px;line-height:18.74px;"></div>
<div class="f" style="left:187.40px;top:392.37px;width:80.50px;height:18.74px;line-height:18.74px;"></div>
<div class="f" style="left:271.20px;top:392.37px;width:91.60px;height:18.74px;line-height:18.74px;"></div>
<div class="f" style="left:365.20px;top:392.37px;width:92.10px;height:18.74px;line-height:18.74px;"></div>
<div class="f" style="left:459.80px;top:392.37px;width:91.80px;height:18.74px;line-height:18.74px;"></div>
<div class="f" style="left:554.60px;top:392.37px;width:91.30px;height:18.74px;line-height:18.74px;"></div>
<div class="f" style="left:647.50px;top:392.37px;width:92.40px;height:18.74px;line-height:18.74px;"></div>
<div class="f" style="left:742.80px;top:392.37px;width:91.00px;height:18.74px;line-height:18.74px;"></div>
<div class="f" style="left:836.10px;top:392.37px;width:91.60px;height:18.74px;line-height:18.74px;"></div>
<div class="f" style="left:931.60px;top:392.37px;width:40.00px;height:18.74px;line-height:18.74px;"><div style="right:0;top:0;width:15px;height:100%;background:#e6eaf4"></div><svg style="right:3.6px;top:6.6px" width="7.6" height="4.4" viewBox="0 0 8 4.6"><path d="M0 0h8L4 4.6z" fill="#b4b4b8"/></svg></div>
<div class="ck" style="left:976.6px;top:395.87px"></div>
<div class="f" style="left:28.40px;top:411.02px;width:33.50px;height:18.74px;line-height:18.74px;"></div>
<div class="f" style="left:63.20px;top:411.02px;width:32.30px;height:18.74px;line-height:18.74px;"></div>
<div class="f" style="left:97.00px;top:411.02px;width:32.40px;height:18.74px;line-height:18.74px;"></div>
<div class="f" style="left:131.30px;top:411.02px;width:32.00px;height:18.74px;line-height:18.74px;"></div>
<div class="f" style="left:166.30px;top:411.02px;width:19.20px;height:18.74px;line-height:18.74px;"></div>
<div class="f" style="left:187.40px;top:411.02px;width:80.50px;height:18.74px;line-height:18.74px;"></div>
<div class="f" style="left:271.20px;top:411.02px;width:91.60px;height:18.74px;line-height:18.74px;"></div>
<div class="f" style="left:365.20px;top:411.02px;width:92.10px;height:18.74px;line-height:18.74px;"></div>
<div class="f" style="left:459.80px;top:411.02px;width:91.80px;height:18.74px;line-height:18.74px;"></div>
<div class="f" style="left:554.60px;top:411.02px;width:91.30px;height:18.74px;line-height:18.74px;"></div>
<div class="f" style="left:647.50px;top:411.02px;width:92.40px;height:18.74px;line-height:18.74px;"></div>
<div class="f" style="left:742.80px;top:411.02px;width:91.00px;height:18.74px;line-height:18.74px;"></div>
<div class="f" style="left:836.10px;top:411.02px;width:91.60px;height:18.74px;line-height:18.74px;"></div>
<div class="f" style="left:931.60px;top:411.02px;width:40.00px;height:18.74px;line-height:18.74px;"><div style="right:0;top:0;width:15px;height:100%;background:#e6eaf4"></div><svg style="right:3.6px;top:6.6px" width="7.6" height="4.4" viewBox="0 0 8 4.6"><path d="M0 0h8L4 4.6z" fill="#b4b4b8"/></svg></div>
<div class="ck" style="left:976.6px;top:414.52px"></div>
<div class="f" style="left:28.40px;top:429.66px;width:33.50px;height:18.74px;line-height:18.74px;"></div>
<div class="f" style="left:63.20px;top:429.66px;width:32.30px;height:18.74px;line-height:18.74px;"></div>
<div class="f" style="left:97.00px;top:429.66px;width:32.40px;height:18.74px;line-height:18.74px;"></div>
<div class="f" style="left:131.30px;top:429.66px;width:32.00px;height:18.74px;line-height:18.74px;"></div>
<div class="f" style="left:166.30px;top:429.66px;width:19.20px;height:18.74px;line-height:18.74px;"></div>
<div class="f" style="left:187.40px;top:429.66px;width:80.50px;height:18.74px;line-height:18.74px;"></div>
<div class="f" style="left:271.20px;top:429.66px;width:91.60px;height:18.74px;line-height:18.74px;"></div>
<div class="f" style="left:365.20px;top:429.66px;width:92.10px;height:18.74px;line-height:18.74px;"></div>
<div class="f" style="left:459.80px;top:429.66px;width:91.80px;height:18.74px;line-height:18.74px;"></div>
<div class="f" style="left:554.60px;top:429.66px;width:91.30px;height:18.74px;line-height:18.74px;"></div>
<div class="f" style="left:647.50px;top:429.66px;width:92.40px;height:18.74px;line-height:18.74px;"></div>
<div class="f" style="left:742.80px;top:429.66px;width:91.00px;height:18.74px;line-height:18.74px;"></div>
<div class="f" style="left:836.10px;top:429.66px;width:91.60px;height:18.74px;line-height:18.74px;"></div>
<div class="f" style="left:931.60px;top:429.66px;width:40.00px;height:18.74px;line-height:18.74px;"><div style="right:0;top:0;width:15px;height:100%;background:#e6eaf4"></div><svg style="right:3.6px;top:6.6px" width="7.6" height="4.4" viewBox="0 0 8 4.6"><path d="M0 0h8L4 4.6z" fill="#b4b4b8"/></svg></div>
<div class="ck" style="left:976.6px;top:433.16px"></div>
<div class="f" style="left:28.40px;top:448.30px;width:33.50px;height:18.74px;line-height:18.74px;"></div>
<div class="f" style="left:63.20px;top:448.30px;width:32.30px;height:18.74px;line-height:18.74px;"></div>
<div class="f" style="left:97.00px;top:448.30px;width:32.40px;height:18.74px;line-height:18.74px;"></div>
<div class="f" style="left:131.30px;top:448.30px;width:32.00px;height:18.74px;line-height:18.74px;"></div>
<div class="f" style="left:166.30px;top:448.30px;width:19.20px;height:18.74px;line-height:18.74px;"></div>
<div class="f" style="left:187.40px;top:448.30px;width:80.50px;height:18.74px;line-height:18.74px;"></div>
<div class="f" style="left:271.20px;top:448.30px;width:91.60px;height:18.74px;line-height:18.74px;"></div>
<div class="f" style="left:365.20px;top:448.30px;width:92.10px;height:18.74px;line-height:18.74px;"></div>
<div class="f" style="left:459.80px;top:448.30px;width:91.80px;height:18.74px;line-height:18.74px;"></div>
<div class="f" style="left:554.60px;top:448.30px;width:91.30px;height:18.74px;line-height:18.74px;"></div>
<div class="f" style="left:647.50px;top:448.30px;width:92.40px;height:18.74px;line-height:18.74px;"></div>
<div class="f" style="left:742.80px;top:448.30px;width:91.00px;height:18.74px;line-height:18.74px;"></div>
<div class="f" style="left:836.10px;top:448.30px;width:91.60px;height:18.74px;line-height:18.74px;"></div>
<div class="f" style="left:931.60px;top:448.30px;width:40.00px;height:18.74px;line-height:18.74px;"><div style="right:0;top:0;width:15px;height:100%;background:#e6eaf4"></div><svg style="right:3.6px;top:6.6px" width="7.6" height="4.4" viewBox="0 0 8 4.6"><path d="M0 0h8L4 4.6z" fill="#b4b4b8"/></svg></div>
<div class="ck" style="left:976.6px;top:451.80px"></div>
<div style="left:12.2px;top:187.4px;width:14.400000000000002px;height:280.4px;background:#e9eef8;border:1px solid #bccde6;border-radius:7px"></div><div style="left:12.2px;top:187.4px;width:14.400000000000002px;height:14.4px;border:1px solid #bccde6;border-radius:7px 7px 0 0;background:#e9eef8"></div><div style="left:12.2px;top:453.40000000000003px;width:14.400000000000002px;height:14.4px;border:1px solid #bccde6;border-radius:0 0 7px 7px;background:#e9eef8"></div><svg style="left:15.599999999999998px;top:193.0px" width="7.6" height="4.4" viewBox="0 0 8 4.6"><path d="M0 4.6h8L4 0z" fill="#6a6a7a"/></svg><svg style="left:15.599999999999998px;top:458.40000000000003px" width="7.6" height="4.4" viewBox="0 0 8 4.6"><path d="M0 0h8L4 4.6z" fill="#6a6a7a"/></svg>
<div class="l" style="left:-240.60px;width:300px;text-align:right;top:468.80px;">Filial</div>
<div class="f y lb c" style="left:63.50px;top:467.00px;width:31.80px;height:18.80px;line-height:18.80px;">1</div>
<div class="f y lb p" style="left:97.20px;top:467.00px;width:124.80px;height:18.80px;line-height:18.80px;padding-left:2px;letter-spacing:-0.15px;">DENVER TECNOLOGIA L</div>
<div class="l" style="left:244.60px;top:468.80px;letter-spacing:0.2px">Total</div>
<div class="f y bl r" style="left:271.20px;top:467.00px;width:91.60px;height:18.80px;line-height:18.80px;">120.54</div>
<div class="f y bl r" style="left:365.20px;top:467.00px;width:92.10px;height:18.80px;line-height:18.80px;">0.00</div>
<div class="f y rd r" style="left:459.80px;top:467.00px;width:91.80px;height:18.80px;line-height:18.80px;">61.94</div>
<div class="f y bl r" style="left:554.60px;top:467.00px;width:91.30px;height:18.80px;line-height:18.80px;">58.60</div>
<div class="l" style="left:-241.60px;width:300px;text-align:right;top:489.60px;">Banco</div>
<div class="f y lb p" style="left:63.50px;top:488.20px;width:158.50px;height:18.60px;line-height:18.60px;padding-left:2px;letter-spacing:-0.15px;">BANCO INTER S.A.</div>
<div class="l" style="left:-241.60px;width:300px;text-align:right;top:508.80px;">Moeda</div>
<div class="f y lb c" style="left:63.50px;top:506.80px;width:31.80px;height:18.60px;line-height:18.60px;">1</div>
<div class="f y lb p" style="left:97.20px;top:506.80px;width:65.20px;height:18.60px;line-height:18.60px;padding-left:2px;letter-spacing:-0.15px;">REAL</div>
<div class="l" style="left:298.40px;top:490.20px;">Data Saldo Ref</div>
<div class="f y b c" style="left:374.50px;top:488.30px;width:65.40px;height:18.30px;line-height:18.30px;">04/09/2025</div>
<div class="l" style="left:-21.20px;width:300px;text-align:right;top:530.00px;">Conta Debito</div>
<div class="l" style="left:-21.20px;width:300px;text-align:right;top:548.60px;">Conta Credito</div>
<div class="l" style="left:-20.90px;width:300px;text-align:right;top:567.00px;letter-spacing:0.3px">Valor</div>
<div class="l" style="left:-21.10px;width:300px;text-align:right;top:586.00px;letter-spacing:0.12px">Divisao/Secao</div>
<div class="f" style="left:283.30px;top:528.20px;width:32.70px;height:18.75px;line-height:18.75px;"></div>
<div class="f" style="left:316.30px;top:528.20px;width:33.40px;height:18.75px;line-height:18.75px;"></div>
<div class="f" style="left:350.80px;top:528.20px;width:46.70px;height:18.75px;line-height:18.75px;"></div>
<div class="f" style="left:400.20px;top:528.20px;width:19.60px;height:18.75px;line-height:18.75px;"></div>
<div class="f" style="left:283.30px;top:546.85px;width:32.70px;height:18.75px;line-height:18.75px;"></div>
<div class="f" style="left:316.30px;top:546.85px;width:33.40px;height:18.75px;line-height:18.75px;"></div>
<div class="f" style="left:350.80px;top:546.85px;width:46.70px;height:18.75px;line-height:18.75px;"></div>
<div class="f" style="left:400.20px;top:546.85px;width:19.60px;height:18.75px;line-height:18.75px;"></div>
<div class="f" style="left:283.30px;top:565.50px;width:92.60px;height:18.75px;line-height:18.75px;"></div>
<div class="f" style="left:283.30px;top:584.15px;width:32.70px;height:18.75px;line-height:18.75px;"></div>
<div class="f" style="left:316.30px;top:584.15px;width:33.40px;height:18.75px;line-height:18.75px;"></div>
<div class="f" style="left:350.80px;top:584.15px;width:69.00px;height:18.75px;line-height:18.75px;"></div>
<div class="wb" style="left:176.6px;top:559.4px;width:24px;height:23.2px;border:1px solid #d5e1f3;border-radius:3px"></div><svg style="left:180.2px;top:566.8px" width="17" height="9" viewBox="0 0 17 9"><path d="M0 0h17L8.5 9z" fill="#000"/></svg>
<div class="wb" style="left:425.5px;top:551.2px;width:24px;height:23.2px;border:1px solid #d5e1f3;border-radius:3px"></div>
<svg style="left:425.5px;top:549.8px" width="24" height="24" viewBox="0 0 24 24"><path d="M8.4 12.8L11.6 10.3Q12.4 9.9 13.4 9.9H15Q17.6 10.4 17.7 13Q17.6 15 16.2 16.6" stroke="#000080" stroke-width="1.4" fill="none"/><path d="M5.7 10.6v5.4h5.4z" fill="#000080"/></svg>
<div class="wb" style="left:425.5px;top:584.6px;width:24px;height:23.8px;border:1px solid #d5e1f3;border-radius:3px"></div>
<svg style="left:425.5px;top:585px" width="24" height="23" viewBox="0 0 24 23"><path d="M1 13.4l2-1.8 6 5.4L21.6 1.8l1 .8L10.4 21.2H8.6z" fill="#000"/></svg>
<div class="l" style="left:476.80px;top:499.40px;">Empresa</div>
<div class="l" style="left:539.60px;top:500.00px;">Conta Debito</div>
<div class="l" style="left:673.70px;top:500.00px;">Conta Credito</div>
<div class="l" style="left:773.40px;top:500.00px;letter-spacing:0.35px">Vlr.Transferencia</div>
<div style="left:867.8px;top:514.8000000000001px;width:15.6px;height:18.65px;background:#ffffc8"></div>
<div style="left:867.8px;top:533.45px;width:15.6px;height:74.60px;background:#fff"></div>
<div class="f y" style="left:480.20px;top:515.20px;width:33.60px;height:18.75px;line-height:18.75px;"></div>
<div class="f y" style="left:516.30px;top:515.20px;width:33.60px;height:18.75px;line-height:18.75px;"></div>
<div class="f y" style="left:552.40px;top:515.20px;width:33.40px;height:18.75px;line-height:18.75px;"></div>
<div class="f y" style="left:587.80px;top:515.20px;width:32.20px;height:18.75px;line-height:18.75px;"></div>
<div class="f y" style="left:622.50px;top:515.20px;width:19.50px;height:18.75px;line-height:18.75px;"></div>
<div class="f y" style="left:644.60px;top:515.20px;width:33.40px;height:18.75px;line-height:18.75px;"></div>
<div class="f y" style="left:680.00px;top:515.20px;width:32.20px;height:18.75px;line-height:18.75px;"></div>
<div class="f y" style="left:714.90px;top:515.20px;width:33.30px;height:18.75px;line-height:18.75px;"></div>
<div class="f y" style="left:750.20px;top:515.20px;width:19.90px;height:18.75px;line-height:18.75px;"></div>
<div class="f y" style="left:772.20px;top:515.20px;width:93.80px;height:18.75px;line-height:18.75px;"></div>
<div class="ck" style="left:868px;top:518.40px;width:11px;height:11px;background:#fff;"></div>
<div class="f" style="left:480.20px;top:533.85px;width:33.60px;height:18.75px;line-height:18.75px;"></div>
<div class="f" style="left:516.30px;top:533.85px;width:33.60px;height:18.75px;line-height:18.75px;"></div>
<div class="f" style="left:552.40px;top:533.85px;width:33.40px;height:18.75px;line-height:18.75px;"></div>
<div class="f" style="left:587.80px;top:533.85px;width:32.20px;height:18.75px;line-height:18.75px;"></div>
<div class="f" style="left:622.50px;top:533.85px;width:19.50px;height:18.75px;line-height:18.75px;"></div>
<div class="f" style="left:644.60px;top:533.85px;width:33.40px;height:18.75px;line-height:18.75px;"></div>
<div class="f" style="left:680.00px;top:533.85px;width:32.20px;height:18.75px;line-height:18.75px;"></div>
<div class="f" style="left:714.90px;top:533.85px;width:33.30px;height:18.75px;line-height:18.75px;"></div>
<div class="f" style="left:750.20px;top:533.85px;width:19.90px;height:18.75px;line-height:18.75px;"></div>
<div class="f" style="left:772.20px;top:533.85px;width:93.80px;height:18.75px;line-height:18.75px;"></div>
<div class="ck" style="left:868px;top:537.05px;width:11px;height:11px;"></div>
<div class="f" style="left:480.20px;top:552.50px;width:33.60px;height:18.75px;line-height:18.75px;"></div>
<div class="f" style="left:516.30px;top:552.50px;width:33.60px;height:18.75px;line-height:18.75px;"></div>
<div class="f" style="left:552.40px;top:552.50px;width:33.40px;height:18.75px;line-height:18.75px;"></div>
<div class="f" style="left:587.80px;top:552.50px;width:32.20px;height:18.75px;line-height:18.75px;"></div>
<div class="f" style="left:622.50px;top:552.50px;width:19.50px;height:18.75px;line-height:18.75px;"></div>
<div class="f" style="left:644.60px;top:552.50px;width:33.40px;height:18.75px;line-height:18.75px;"></div>
<div class="f" style="left:680.00px;top:552.50px;width:32.20px;height:18.75px;line-height:18.75px;"></div>
<div class="f" style="left:714.90px;top:552.50px;width:33.30px;height:18.75px;line-height:18.75px;"></div>
<div class="f" style="left:750.20px;top:552.50px;width:19.90px;height:18.75px;line-height:18.75px;"></div>
<div class="f" style="left:772.20px;top:552.50px;width:93.80px;height:18.75px;line-height:18.75px;"></div>
<div class="ck" style="left:868px;top:555.70px;width:11px;height:11px;"></div>
<div class="f" style="left:480.20px;top:571.15px;width:33.60px;height:18.75px;line-height:18.75px;"></div>
<div class="f" style="left:516.30px;top:571.15px;width:33.60px;height:18.75px;line-height:18.75px;"></div>
<div class="f" style="left:552.40px;top:571.15px;width:33.40px;height:18.75px;line-height:18.75px;"></div>
<div class="f" style="left:587.80px;top:571.15px;width:32.20px;height:18.75px;line-height:18.75px;"></div>
<div class="f" style="left:622.50px;top:571.15px;width:19.50px;height:18.75px;line-height:18.75px;"></div>
<div class="f" style="left:644.60px;top:571.15px;width:33.40px;height:18.75px;line-height:18.75px;"></div>
<div class="f" style="left:680.00px;top:571.15px;width:32.20px;height:18.75px;line-height:18.75px;"></div>
<div class="f" style="left:714.90px;top:571.15px;width:33.30px;height:18.75px;line-height:18.75px;"></div>
<div class="f" style="left:750.20px;top:571.15px;width:19.90px;height:18.75px;line-height:18.75px;"></div>
<div class="f" style="left:772.20px;top:571.15px;width:93.80px;height:18.75px;line-height:18.75px;"></div>
<div class="ck" style="left:868px;top:574.35px;width:11px;height:11px;"></div>
<div class="f" style="left:480.20px;top:589.80px;width:33.60px;height:18.75px;line-height:18.75px;"></div>
<div class="f" style="left:516.30px;top:589.80px;width:33.60px;height:18.75px;line-height:18.75px;"></div>
<div class="f" style="left:552.40px;top:589.80px;width:33.40px;height:18.75px;line-height:18.75px;"></div>
<div class="f" style="left:587.80px;top:589.80px;width:32.20px;height:18.75px;line-height:18.75px;"></div>
<div class="f" style="left:622.50px;top:589.80px;width:19.50px;height:18.75px;line-height:18.75px;"></div>
<div class="f" style="left:644.60px;top:589.80px;width:33.40px;height:18.75px;line-height:18.75px;"></div>
<div class="f" style="left:680.00px;top:589.80px;width:32.20px;height:18.75px;line-height:18.75px;"></div>
<div class="f" style="left:714.90px;top:589.80px;width:33.30px;height:18.75px;line-height:18.75px;"></div>
<div class="f" style="left:750.20px;top:589.80px;width:19.90px;height:18.75px;line-height:18.75px;"></div>
<div class="f" style="left:772.20px;top:589.80px;width:93.80px;height:18.75px;line-height:18.75px;"></div>
<div class="ck" style="left:868px;top:593.00px;width:11px;height:11px;"></div>
<div style="left:463.6px;top:515.8px;width:14.199999999999989px;height:91.80000000000007px;background:#e9eef8;border:1px solid #bccde6;border-radius:7px"></div><div style="left:463.6px;top:515.8px;width:14.199999999999989px;height:14.4px;border:1px solid #bccde6;border-radius:7px 7px 0 0;background:#e9eef8"></div><div style="left:463.6px;top:593.2px;width:14.199999999999989px;height:14.4px;border:1px solid #bccde6;border-radius:0 0 7px 7px;background:#e9eef8"></div><svg style="left:466.90000000000003px;top:521.4px" width="7.6" height="4.4" viewBox="0 0 8 4.6"><path d="M0 4.6h8L4 0z" fill="#6a6a7a"/></svg><svg style="left:466.90000000000003px;top:598.2px" width="7.6" height="4.4" viewBox="0 0 8 4.6"><path d="M0 0h8L4 4.6z" fill="#6a6a7a"/></svg>
<div class="wb" style="left:888.4px;top:552.2px;width:24.2px;height:24.2px;border:1px solid #d5e1f3;border-radius:3px"></div>
<svg style="left:892.2px;top:555.6px" width="16" height="16.4" viewBox="0 0 16 17"><rect x="0.5" y="0.5" width="15" height="16" rx="1" fill="#00f" stroke="#000" stroke-width="0.8"/><rect x="3" y="1" width="10" height="6.4" fill="#fff"/><rect x="4" y="10.6" width="8" height="6" fill="#a9a9a9"/><rect x="5" y="11.6" width="2" height="4" fill="#00f"/></svg>
<div class="wb" style="left:965.5px;top:492.4px;width:24px;height:24px;border:1px solid #d5e1f3;border-radius:3px"></div>
<svg style="left:970.2px;top:494.9px" width="14" height="17" viewBox="0 0 14 17"><path d="M3.6 8V4.4C3.6 .2 10.4 .2 10.4 4.4V8" stroke="#777" stroke-width="1" fill="none"/><rect x="1" y="7.6" width="12" height="8.8" fill="#e6d800" stroke="#9a8f00" stroke-width="0.8"/><path d="M2 9.6h10M2 11.6h10M2 13.6h10" stroke="#fff36a" stroke-width="0.6"/><rect x="5.4" y="10" width="3.2" height="5" fill="#000"/><path d="M4.4 12L7 9l2.6 3z" fill="#000"/></svg>
<div style="left:962px;top:526.9px;width:29.3px;height:24.2px;border:3px solid #f00;border-radius:2px;background:#fff"></div>
<svg style="left:972.2px;top:529.3px" width="14" height="17" viewBox="0 0 14 17"><path d="M-3 6V4C-3 0.4 4 0.4 4 4V7.4" stroke="#777" stroke-width="1" fill="none"/><path d="M4 7.2h6" stroke="#222" stroke-width="0.9"/><rect x="1" y="7.6" width="12" height="8.8" fill="#e6d800" stroke="#9a8f00" stroke-width="0.8"/><path d="M2 9.6h10M2 11.6h10M2 13.6h10" stroke="#fff36a" stroke-width="0.6"/><rect x="5.4" y="10" width="3.2" height="5" fill="#000"/><path d="M4.4 12L7 9l2.6 3z" fill="#000"/></svg>
<div style="left:0;top:630px;width:1015.6px;height:24.6px;border:1px solid #5d7eae;border-left:none;border-radius:0 0 5px 0;background:#c3c3c3"></div>
<div style="left:0;top:629.8px;width:127.8px;height:22.4px;background:#b9d4ee;border-right:1px solid #5d7eae;border-bottom:1px solid #5d7eae;border-radius:0 0 5px 5px;"></div>
<div style="left:2px;top:628px;width:125px;height:2.4px;background:#fff"></div>
<div class="l" style="left:8.30px;top:633.00px;letter-spacing:0.24px">Saldos e Transferencia</div>
<div style="left:0;top:654.6px;width:1018px;height:4px;background:#e9f1f8"></div>
<div style="left:578px;top:290.2px;width:203.6px;height:158.6px;background:#e8eef7;border:1px solid #3f6a9e;border-top-color:#34598f;border-radius:3px;overflow:hidden"><div style="left:0;top:0;width:200.8px;height:19.7px;background:#2c83c6"></div></div>
<div style="left:581.2px;top:293.8px;height:16px;line-height:16px;font-size:12px;color:#fff">MSG_00009084 - Atencao</div>
<div style="left:765px;top:295px;width:12.2px;height:12.2px;background:linear-gradient(#cfe4f6,#b4d6f1);border:1px solid #d3e6f6"></div><svg style="left:767.2px;top:297.2px" width="8" height="8" viewBox="0 0 8 8"><path d="M0.6 0.6l6.8 6.8M7.4 0.6L0.6 7.4" stroke="#3586c8" stroke-width="1.9"/></svg>
<svg style="left:613px;top:343px" width="40" height="35" viewBox="0 0 40 35"><path d="M20.6 3.4L3.4 31.6Q3 33 4.6 33.2L38 33.4Q39.8 33.2 39 31.6z" fill="#8c8c8c" opacity="0.8"/><path d="M19.3 1.4Q18 1.4 17.2 2.8L1.5 29.6Q0.8 31.6 2.8 31.8L36.6 32Q38.8 31.8 37.8 29.8L21.4 2.8Q20.6 1.4 19.3 1.4z" fill="#000"/><path d="M19.3 2.2Q18.4 2.2 17.8 3.2L2.3 29.7" stroke="#8a7a00" stroke-width="1.5" fill="none"/><path d="M19.2 4.2L3.6 29.8H35.4z" fill="#ff0" stroke="#ff0" stroke-width="1" stroke-linejoin="round"/><path d="M16.9 11.4c0-2.6 5-2.6 5 0l-1.5 10.8h-2z" fill="#000"/><path d="M19.4 23.8l2.6 2.7-2.6 2.7-2.6-2.7z" fill="#000"/></svg>
<div style="left:685px;top:343.6px;height:16px;line-height:16px;font-size:12px;color:#333;letter-spacing:0.2px">Reabrir Saldo?</div>
<div style="left:681px;top:411.2px;width:90px;height:26.2px;border:1px solid #42587c;border-radius:0 9px 9px 0;background:#d6e5f5"></div>
<div style="left:684.4px;top:414px;width:77px;height:19.8px;border-top:1px dotted #222;border-bottom:1px dotted #222"></div>
<div style="left:590px;top:409px;width:91.2px;height:29.6px;border:3px solid #f00;border-radius:1.5px;background:#d6e5f5"></div>
<div style="left:592.6px;top:411.6px;width:5px;height:24.6px;border-left:1px solid #8aa0c0;border-radius:5px 0 0 5px"></div>
<div style="left:586.6px;top:416.6px;width:100px;text-align:center;height:16px;line-height:16px;font-size:12px;color:#333"><u>O</u>K</div>
<div style="left:673px;top:416.6px;width:100px;text-align:center;height:16px;line-height:16px;font-size:12px;color:#333;letter-spacing:0.3px"><u>C</u>ancela</div>
</body></html>
